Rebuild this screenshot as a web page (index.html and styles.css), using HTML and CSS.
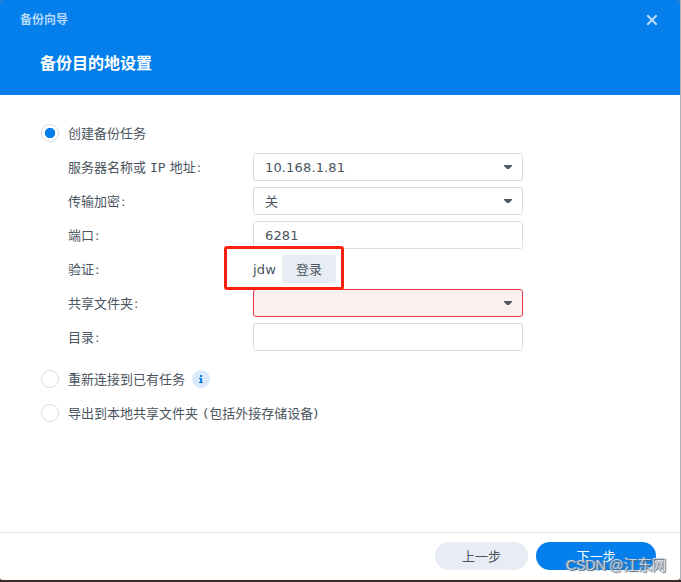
FILE: index.html
```html
<!DOCTYPE html>
<html lang="zh-CN">
<head>
<meta charset="utf-8">
<title>备份向导</title>
<link rel="stylesheet" href="styles.css">
</head>
<body>
<div class="dialog">
  <header class="header">
    <div class="titlebar">
      <span class="caption">备份向导</span>
      <svg class="close" width="12" height="12" viewBox="0 0 12 12"><path d="M1.3 1.3L10.7 10.7M10.7 1.3L1.3 10.7"/></svg>
    </div>
    <h1 class="heading">备份目的地设置</h1>
  </header>
  <main class="content">
    <div class="option"><span class="radio checked"></span><span class="text">创建备份任务</span></div>
    <div class="form">
      <div class="row"><label>服务器名称或<span class="ip">IP</span>地址<span class="colon">:</span></label><div class="field"><span class="number">10.168.1.81</span><svg class="arrow" width="8" height="4" viewBox="0 0 8 4"><path d="M0 0H8V1L5 4H3L0 1Z"/></svg></div></div>
      <div class="row"><label>传输加密<span class="colon">:</span></label><div class="field"><span class="value">关</span><svg class="arrow" width="8" height="4" viewBox="0 0 8 4"><path d="M0 0H8V1L5 4H3L0 1Z"/></svg></div></div>
      <div class="row"><label>端口<span class="colon">:</span></label><div class="field"><span class="number">6281</span></div></div>
      <div class="row auth"><label>验证<span class="colon">:</span></label><span class="user">jdw</span><button class="login">登录</button><div class="highlight"></div></div>
      <div class="row"><label>共享文件夹<span class="colon">:</span></label><div class="field invalid"><svg class="arrow" width="8" height="4" viewBox="0 0 8 4"><path d="M0 0H8V1L5 4H3L0 1Z"/></svg></div></div>
      <div class="row"><label>目录<span class="colon">:</span></label><div class="field"></div></div>
    </div>
    <div class="option reconnect"><span class="radio"></span><span class="text">重新连接到已有任务</span><svg class="info" width="18" height="18" viewBox="0 0 18 18"><circle cx="9" cy="9" r="9"/><path d="M8 5h2v2H8zM7 8h3v4h1v1H7v-1h1V9H7z"/></svg></div>
    <div class="option"><span class="radio"></span><span class="text">导出到本地共享文件夹 <span class="paren">(</span>包括外接存储设备)</span></div>
  </main>
  <footer class="footer">
    <button class="pill back">上一步</button>
    <button class="pill next">下一步</button>
  </footer>
</div>
<div class="watermark">CSDN @江东网</div>
</body>
</html>
```
FILE: styles.css
```css
* { box-sizing: border-box; }
body {
  margin: 0;
  height: 582px;
  overflow: hidden;
  position: relative;
  background: linear-gradient(#aeb1b5, #aeb1b5) right top / 1px 580px no-repeat, #3c2a2a;
  font: 13px/20px "DejaVu Sans", "Noto Sans CJK SC", sans-serif;
  color: #4a545e;
}
button { border: 0; padding: 1px 0 0; font: inherit; color: inherit; }
.dialog {
  width: 680px;
  height: 580px;
  display: flex;
  flex-direction: column;
  background: #fff;
  border-radius: 2px;
  overflow: hidden;
}
.header { height: 95px; background: #057feb; color: #fff; }
.titlebar {
  height: 40px;
  padding: 0 22px 0 20px;
  display: flex;
  align-items: center;
  justify-content: space-between;
}
.caption { font-size: 12px; font-weight: 700; color: #b4d9f9; }
.close { fill: none; stroke: #b9dbfa; stroke-width: 2; }
.heading { margin: 12px 0 0 40px; font-size: 16px; line-height: 24px; font-weight: 700; }
.content { flex: 1; padding: 24px 40px 0; }
.option { display: flex; align-items: center; height: 28px; margin-top: 6px; padding-left: 1px; }
.option:first-child { margin-top: 0; }
.radio {
  width: 18px;
  height: 18px;
  margin-right: 9px;
  border: 1px solid #d3dfe8;
  border-radius: 50%;
  background: #fff;
}
.checked { background: radial-gradient(circle, #057feb 4.8px, #fff 5.5px); }
.text { padding-top: 1px; }
.form { padding-left: 28px; margin-top: 6px; display: grid; gap: 6px; }
.row { display: flex; align-items: center; height: 28px; }
.row label { width: 185px; padding-top: 1px; }
.colon { margin-left: 1px; }
.ip { font-family: "DejaVu Sans Mono", monospace; margin: 0 4px; }
.paren { margin: 0 1px; }
.field {
  width: 270px;
  height: 28px;
  padding: 0 10px 0 11px;
  border: 1px solid #d3dfe8;
  border-radius: 3px;
  display: flex;
  align-items: center;
}
.number { letter-spacing: .15px; padding-top: 1px; }
.value { padding-top: 1px; }
.arrow { margin-left: auto; fill: #505a64; }
.invalid { border-color: #e63c41; background: #fcefef; }
.auth { position: relative; }
.user { width: 29px; padding-top: 1px; letter-spacing: .2px; }
.login { width: 54px; height: 28px; border-radius: 3px; background: #e8edf5; }
.highlight {
  position: absolute;
  left: 156px;
  top: -9px;
  width: 120px;
  height: 44px;
  border: 3px solid #ff1f12;
  border-radius: 3px;
}
.reconnect { margin-top: 14px; }
.info { margin-left: 7px; }
.info circle { fill: #d9eafc; }
.info path { fill: #057feb; }
.footer {
  height: 48px;
  padding: 9px 24px 0;
  border-top: 1px solid #e1e7eb;
  display: flex;
  justify-content: flex-end;
  gap: 8px;
}
.pill { height: 28px; border-radius: 14px; }
.back { width: 93px; background: #e8edf5; }
.next { width: 120px; background: #057feb; color: #fff; }
.watermark {
  position: absolute;
  left: 566px;
  top: 555px;
  white-space: nowrap;
  font: 14.5px/20px "Liberation Sans", "Noto Sans CJK SC", sans-serif;
  letter-spacing: -.4px;
  color: rgba(225, 229, 234, .8);
  text-shadow: 1px 1px 1px #5c6874, -1px 0 1px #8d98a3;
}
```
